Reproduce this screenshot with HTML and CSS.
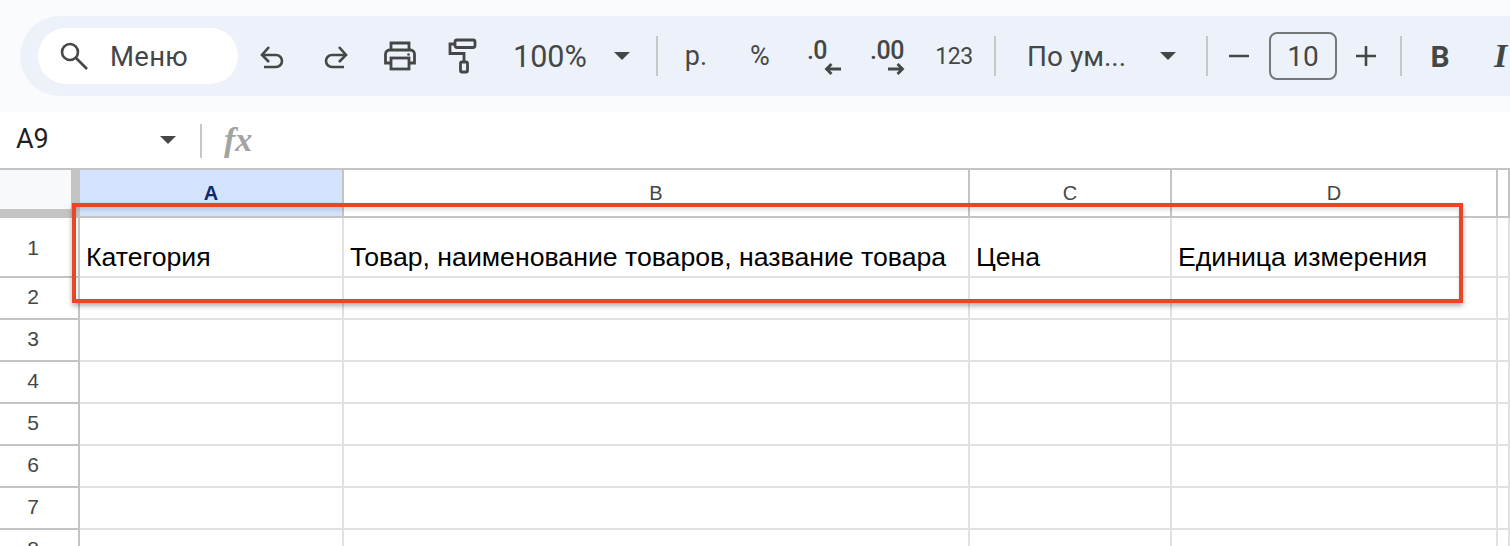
FILE: index.html
```html
<!DOCTYPE html>
<html lang="ru">
<head>
<meta charset="utf-8">
<title>Таблица</title>
<link rel="stylesheet" href="styles.css">
</head>
<body>
<div class="top">
  <div class="toolbar">
    <div class="search">
      <svg class="i-search" width="34" height="34" viewBox="0 0 34 34"><circle cx="13" cy="12" r="8" fill="none" stroke="#444746" stroke-width="2.6"/><path d="M19 18l11 11" stroke="#444746" stroke-width="2.6" fill="none"/></svg>
      <span class="search-text">Меню</span>
    </div>
    <div class="btn"><svg width="32" height="32" viewBox="0 0 32 32" fill="none" stroke="#444746" stroke-width="2.6"><path d="M13 7l-7 8 7 7"/><path d="M6 15H20a6 6 0 0 1 0 12H8"/></svg></div>
    <div class="btn"><svg width="32" height="32" viewBox="0 0 32 32" fill="none" stroke="#444746" stroke-width="2.6"><path d="M19 7l7 8-7 7"/><path d="M26 15H12a6 6 0 0 0 0 12H24"/></svg></div>
    <div class="btn"><svg width="34" height="34" viewBox="0 0 34 34" fill="none" stroke="#444746" stroke-width="2.8"><path d="M8 11V4H26V11"/><path d="M8 24H2.5V15a4 4 0 0 1 4-4H27.500a4 4 0 0 1 4 4V24H26"/><rect x="8" y="19" width="18" height="11"/><circle cx="25.500" cy="15.500" r="1.300" fill="#444746" stroke="none"/></svg></div>
    <div class="btn"><svg width="34" height="36" viewBox="0 0 34 36" fill="none" stroke="#444746" stroke-width="2.8"><rect x="8" y="2" width="20" height="7.500" rx="2"/><path d="M8 6H3V15.500H17V24"/><rect x="13.500" y="24" width="7" height="10" rx="1.500"/></svg></div>
    <div class="zoom-box"><span class="val">100%</span><span class="caret"></span></div>
    <div class="sep sep-a"></div>
    <div class="btn fmt">р.</div>
    <div class="btn fmt">%</div>
    <div class="btn dec">
      <span class="dec-text">.0</span>
      <svg class="dec-arrow" width="17" height="12" viewBox="0 0 17 12" fill="none" stroke="#444746" stroke-width="2.8"><path d="M17 6H2.500M7.500 1L2.500 6l5 5"/></svg>
    </div>
    <div class="btn dec">
      <span class="dec-text dec-text-wide">.00</span>
      <svg class="dec-arrow" width="17" height="12" viewBox="0 0 17 12" fill="none" stroke="#444746" stroke-width="2.8"><path d="M0 6H14.500M9.500 1l5 5-5 5"/></svg>
    </div>
    <div class="btn num">123</div>
    <div class="sep sep-b"></div>
    <div class="font-box"><span class="val font-name">По ум...</span><span class="caret"></span></div>
    <div class="sep sep-c"></div>
    <div class="pm"><svg width="22" height="4" viewBox="0 0 22 4"><path d="M1 2H21" stroke="#444746" stroke-width="2.600"/></svg></div>
    <div class="size">10</div>
    <div class="pm pm-plus"><svg width="22" height="22" viewBox="0 0 22 22"><path d="M1 11H21M11 1V21" stroke="#444746" stroke-width="2.600"/></svg></div>
    <div class="sep sep-d"></div>
    <div class="bold">B</div>
    <div class="italic">I</div>
  </div>
</div>

<div class="formula">
  <span class="ref">A9</span>
  <span class="caret caret-ref"></span>
  <span class="sep sep-f"></span>
  <span class="fx">fx</span>
</div>

<div class="sheet">
  <div class="corner"></div>
  <div class="col col-active">A</div>
  <div class="col">B</div>
  <div class="col">C</div>
  <div class="col">D</div>
  <div class="col"></div>

  <div class="rownum rownum-tall">1</div>
  <div class="cell">Категория</div>
  <div class="cell">Товар, наименование товаров, название товара</div>
  <div class="cell">Цена</div>
  <div class="cell">Единица измерения</div>
  <div class="cell"></div>

  <div class="rownum">2</div><div class="cell"></div><div class="cell"></div><div class="cell"></div><div class="cell"></div><div class="cell"></div>
  <div class="rownum">3</div><div class="cell"></div><div class="cell"></div><div class="cell"></div><div class="cell"></div><div class="cell"></div>
  <div class="rownum">4</div><div class="cell"></div><div class="cell"></div><div class="cell"></div><div class="cell"></div><div class="cell"></div>
  <div class="rownum">5</div><div class="cell"></div><div class="cell"></div><div class="cell"></div><div class="cell"></div><div class="cell"></div>
  <div class="rownum">6</div><div class="cell"></div><div class="cell"></div><div class="cell"></div><div class="cell"></div><div class="cell"></div>
  <div class="rownum">7</div><div class="cell"></div><div class="cell"></div><div class="cell"></div><div class="cell"></div><div class="cell"></div>
  <div class="rownum">8</div><div class="cell"></div><div class="cell"></div><div class="cell"></div><div class="cell"></div><div class="cell"></div>

  <div class="highlight"></div>
</div>
</body>
</html>
```
FILE: styles.css
```css
* { box-sizing: border-box; }
html, body { margin: 0; padding: 0; height: 546px; overflow: hidden; background: #fff; }
body { font-family: Roboto, "Noto Sans", sans-serif; color: #444746; width: 1510px; }

.top { height: 112px; background: #f9fbfd; padding: 16px 0 16px 20px; }
.toolbar { height: 80px; background: #edf2fa; border-radius: 40px 0 0 40px; display: flex; align-items: center; padding-left: 18px; overflow: hidden; }

.search { width: 200px; height: 56px; flex: none; background: #fff; border-radius: 28px; display: flex; align-items: center; padding-left: 19px; }
.i-search { flex: none; margin-top: 2px; }
.search-text { font-size: 27.500px; margin-left: 19px; letter-spacing: .3px; }

.btn { width: 64px; height: 56px; flex: none; display: flex; align-items: center; justify-content: center; }
.search + .btn { margin-left: 2px; }
.fmt { font-size: 27px; }
.num { font-size: 23px; letter-spacing: -.4px; margin-left: 2px; }
.dec { flex-direction: column; align-items: center; font-weight: 500; }
.dec-text { font-size: 25px; line-height: 24px; margin-top: -4px; margin-left: -14px; letter-spacing: -.5px; }
.dec-text-wide { margin-left: -2px; }
.dec-arrow { margin-top: 0; margin-left: 16px; margin-bottom: -6px; }

.zoom-box { width: 160px; flex: none; display: flex; align-items: center; padding-left: 17px; }
.val { font-size: 30.500px; }
.caret { width: 0; height: 0; border-left: 8px solid transparent; border-right: 8px solid transparent; border-top: 8px solid #444746; flex: none; }
.zoom-box .caret { margin-left: 27px; }

.sep { width: 2px; height: 40px; background: #c7c7c7; flex: none; }
.sep-a { margin-right: 6px; }
.sep-b { margin-left: 8px; }
.font-box { width: 210px; flex: none; display: flex; align-items: center; padding-left: 31px; }
.font-name { width: 133px; font-size: 28px; white-space: nowrap; }
.pm { width: 22px; flex: none; margin-left: 20px; display: flex; align-items: center; }
.size { width: 68px; height: 48px; flex: none; margin-left: 19px; border: 2px solid #747775; border-radius: 8px; font-size: 28px; display: flex; align-items: center; justify-content: center; }
.pm-plus { margin-left: 18px; }
.sep-d { margin-left: 23px; }
.bold { width: 24px; margin-left: 26px; flex: none; font-size: 30px; font-weight: 700; text-align: center; }
.italic { margin-left: 42px; flex: none; font-family: "Liberation Serif", serif; font-style: italic; font-weight: 700; font-size: 34px; line-height: 34px; }

.formula { height: 56px; background: #fff; display: flex; align-items: center; padding-left: 16px; }
.ref { width: 144px; font-size: 27px; color: #1f1f1f; flex: none; margin-top: -2px; }
.caret-ref { margin-left: 0; }
.sep-f { height: 34px; margin-left: 24px; margin-top: 2px; }
.fx { margin-left: 22px; font-family: "Liberation Serif", serif; font-style: italic; font-weight: 700; font-size: 34px; color: #a3a3a3; }

.sheet { position: relative; height: 378px; display: grid; grid-template-columns: 80px 264px 626px 202px 326px 12px; grid-template-rows: 48px 60px repeat(7, 42px); overflow: hidden; border-top: 2px solid #c4c4c4; }

.corner { background: #f8f9fa; border-right: 9px solid #c4c4c4; border-bottom: 9px solid #c4c4c4; }
.col { background: #fff; border-right: 2px solid #c4c4c4; border-bottom: 2px solid #c4c4c4; font-family: "Liberation Sans", sans-serif; font-size: 20px; text-align: center; line-height: 46px; color: #444746; }
.col-active { background: #d3e3fd; color: #0b2b6b; font-weight: 700; }
.rownum { background: #fff; border-right: 2px solid #c4c4c4; border-bottom: 2px solid #c4c4c4; font-family: "Liberation Sans", sans-serif; font-size: 21px; color: #444746; display: flex; align-items: center; justify-content: center; padding: 0 12px 2px 0; }
.rownum-tall { padding-bottom: 0; padding-top: 2px; }
.cell { border-right: 2px solid #e1e1e1; border-bottom: 2px solid #e1e1e1; font-family: "Liberation Sans", sans-serif; font-size: 26.670px; color: #000; display: flex; align-items: flex-end; padding: 0 0 4px 6px; white-space: nowrap; line-height: 30px; }

.highlight { position: absolute; left: 72px; top: 33px; width: 1391px; height: 100px; border: 4px solid #ea4529; box-shadow: 0 3px 5px rgba(0,0,0,.3), inset 0 3px 4px rgba(0,0,0,.12); }
```
